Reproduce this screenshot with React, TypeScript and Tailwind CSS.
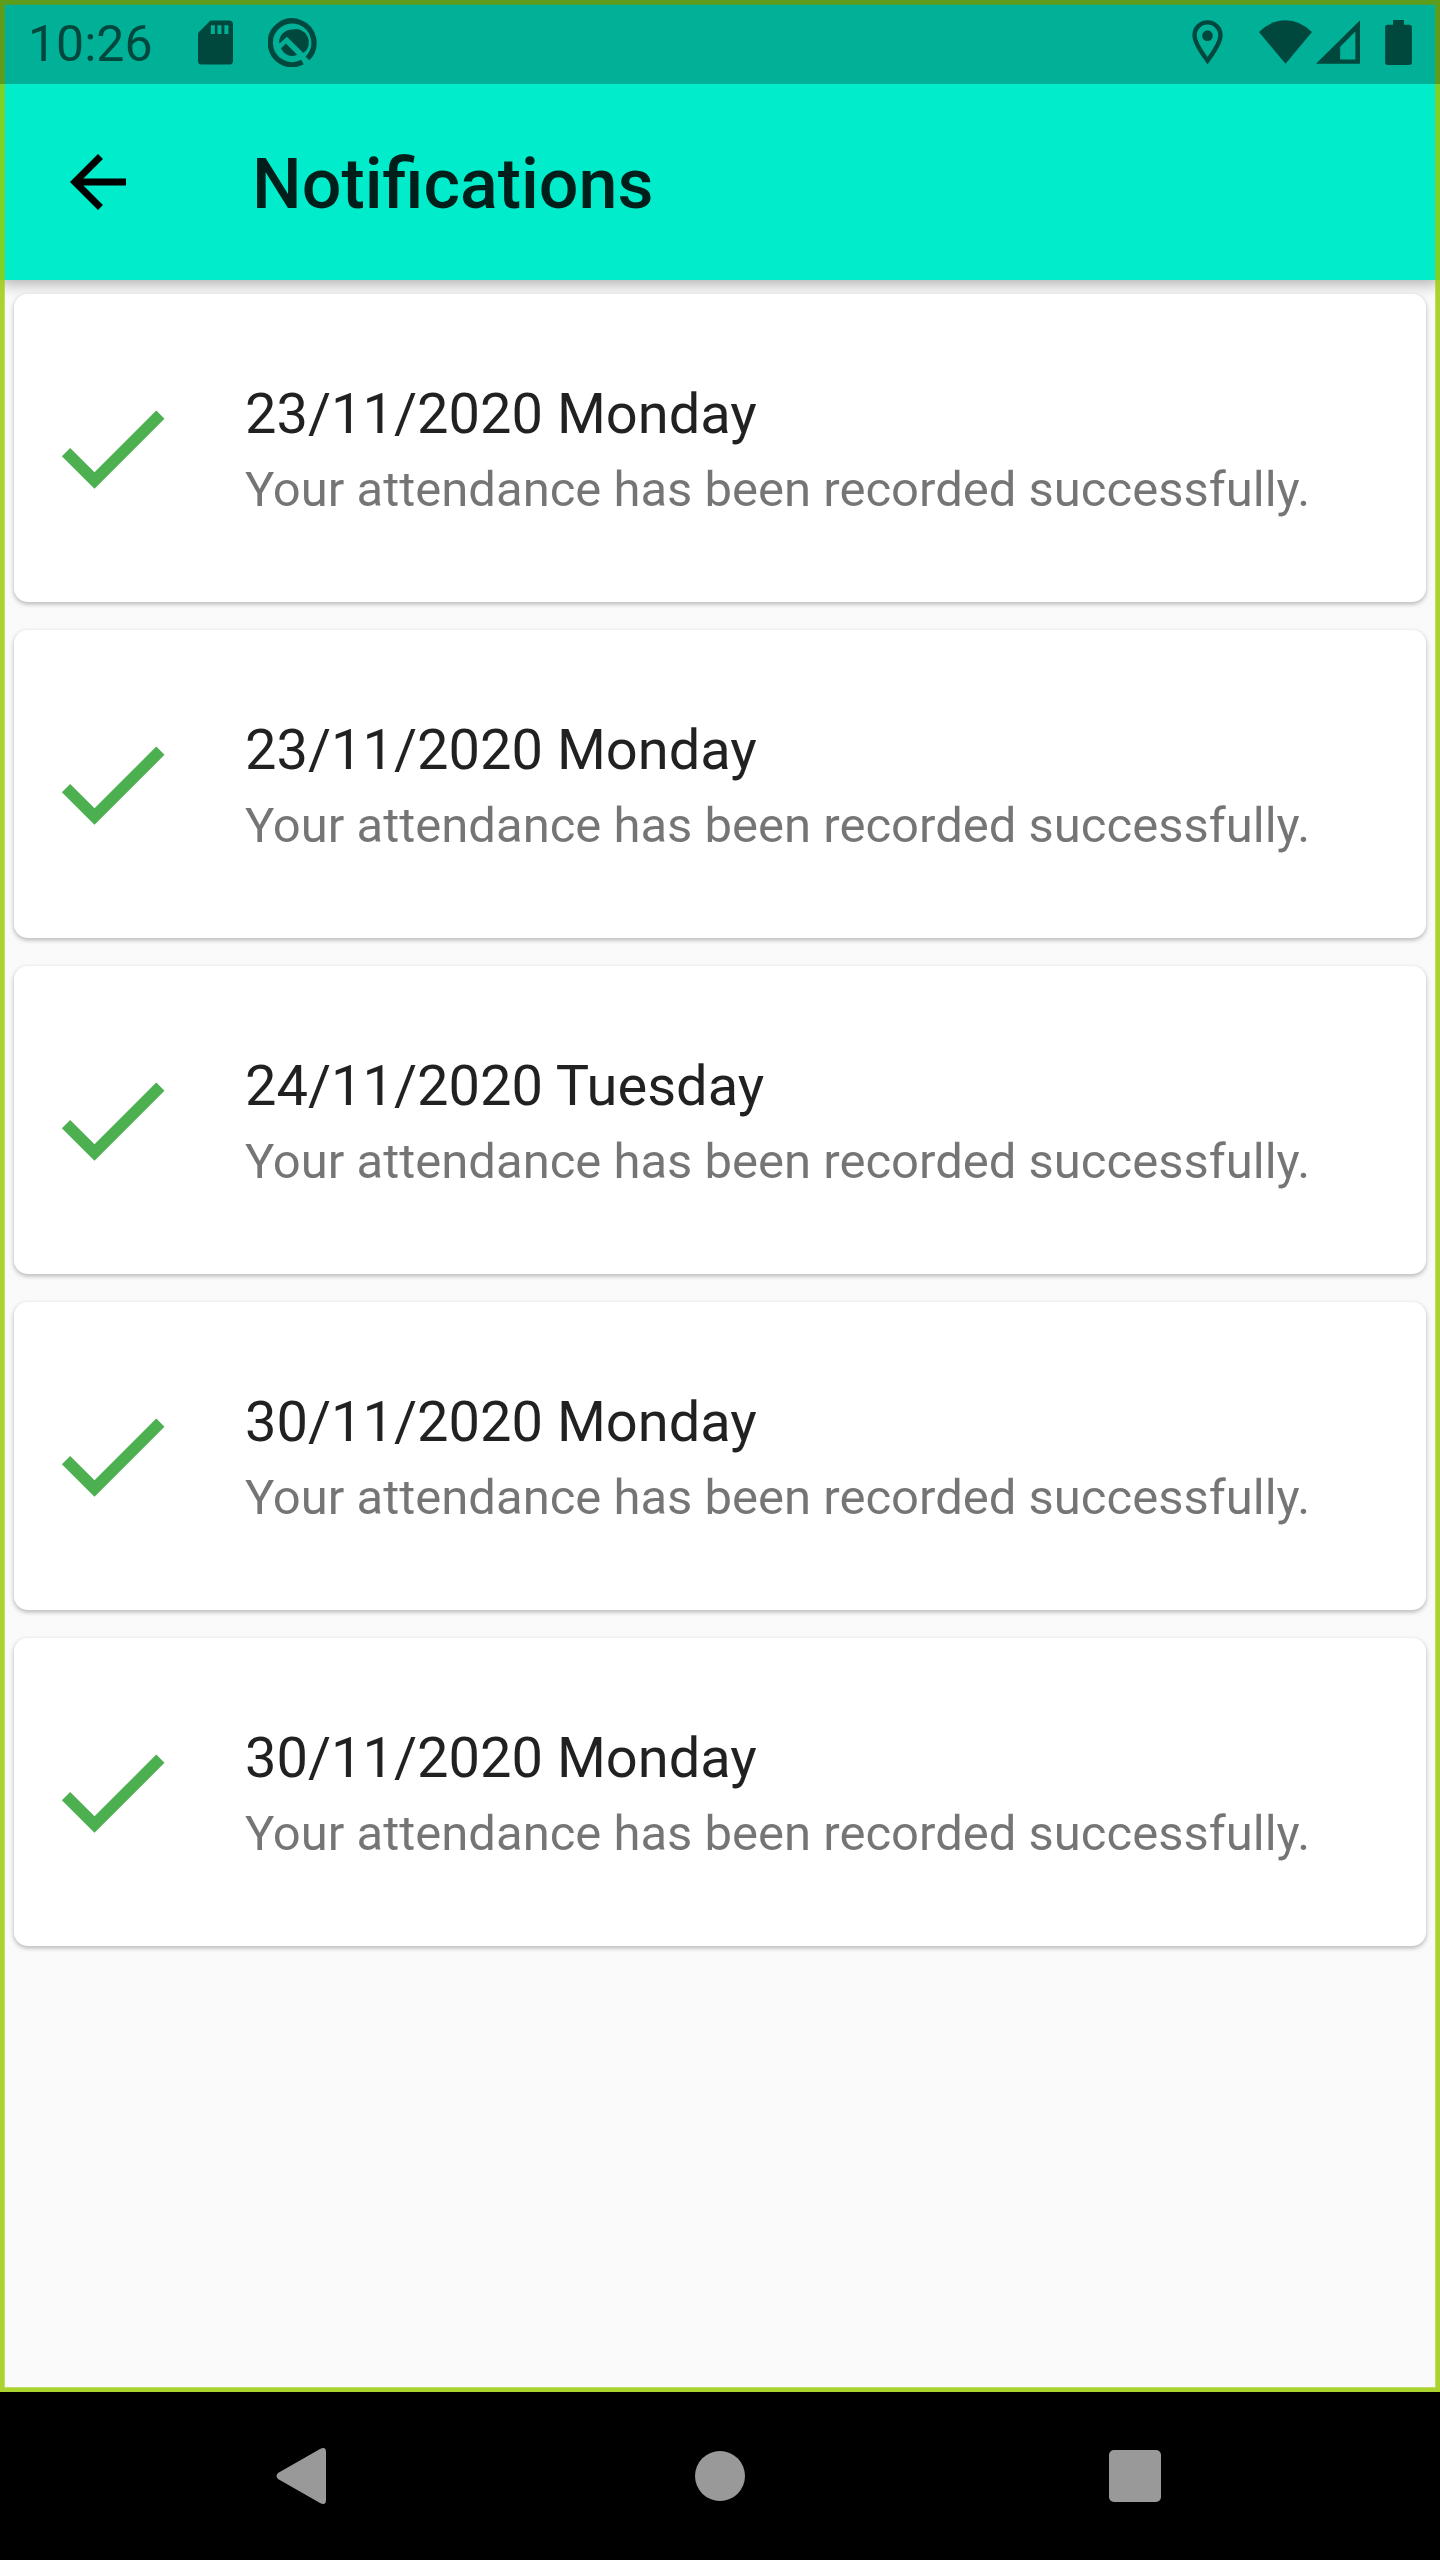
type Notice = { id: number; date: string; message: string };

const MESSAGE = "Your attendance has been recorded successfully.";

const notices: Notice[] = [
  { id: 1, date: "23/11/2020 Monday", message: MESSAGE },
  { id: 2, date: "23/11/2020 Monday", message: MESSAGE },
  { id: 3, date: "24/11/2020 Tuesday", message: MESSAGE },
  { id: 4, date: "30/11/2020 Monday", message: MESSAGE },
  { id: 5, date: "30/11/2020 Monday", message: MESSAGE },
];

function SdCardIcon() {
  return (
    <svg viewBox="0 0 106 134" className="h-[45px] w-[35px]" fill="currentColor" aria-hidden="true">
      <path
        fillRule="evenodd"
        d="M40 0H94Q106 0 106 12V122Q106 134 94 134H12Q0 134 0 122V42Q0 38 3 35L34 4Q37 0 40 0ZM39 15V41H51V15ZM59 15V41H71V15ZM80 15V41H92V15Z"
      />
    </svg>
  );
}

function SystemIcon() {
  return (
    <svg viewBox="0 0 148 148" className="size-[49px]" aria-hidden="true">
      <path
        d="M119 122A66 66 0 1 0 104 133"
        fill="none"
        stroke="currentColor"
        strokeWidth="16"
      />
      <path fill="currentColor" d="M34 75C32 52 52 35 73 35A40 40 0 0 1 107 106L57 57L36 76Z" />
      <path fill="currentColor" d="M39 92L54 77L88 111Q58 124 39 92Z" />
    </svg>
  );
}

function LocationIcon() {
  return (
    <svg viewBox="0 0 92 132" className="h-11 w-[31px]" aria-hidden="true">
      <path
        d="M46 122C36 108 7 72 7 46A39 39 0 0 1 85 46C85 72 56 108 46 122Z"
        fill="none"
        stroke="currentColor"
        strokeWidth="13"
      />
      <circle cx="46" cy="47" r="16" fill="currentColor" />
    </svg>
  );
}

function WifiIcon() {
  return (
    <svg viewBox="0 0 160 132" className="h-11 w-[53px]" fill="currentColor" aria-hidden="true">
      <path d="M0 36Q36 0 80 0T160 36L80 132Z" />
    </svg>
  );
}

function SignalIcon() {
  return (
    <svg viewBox="0 0 133 132" className="size-11" fill="currentColor" aria-hidden="true">
      <path fillRule="evenodd" d="M133 0V132H0ZM119 34L73 80V119H119Z" />
    </svg>
  );
}

function BatteryIcon() {
  return (
    <svg viewBox="0 0 81 136" className="h-[45px] w-[27px]" fill="currentColor" aria-hidden="true">
      <path d="M24 0H57V14H73Q81 14 81 22V128Q81 136 73 136H8Q0 136 0 128V22Q0 14 8 14H24Z" />
    </svg>
  );
}

function StatusBar() {
  return (
    <div className="flex h-[84px] items-center justify-between bg-black/25 px-7 text-[#00483e]">
      <div className="flex items-center">
        <time className="w-[170px] pt-1 text-[50px] leading-[58px]">10:26</time>
        <SdCardIcon />
        <span className="ml-[35px]">
          <SystemIcon />
        </span>
      </div>
      <div className="flex items-center">
        <LocationIcon />
        <span className="ml-9">
          <WifiIcon />
        </span>
        <span className="ml-1">
          <SignalIcon />
        </span>
        <span className="ml-[25px]">
          <BatteryIcon />
        </span>
      </div>
    </div>
  );
}

function NoticeCard({ notice }: { notice: Notice }) {
  return (
    <li className="flex h-[308px] items-center gap-[63px] rounded-[14px] bg-white px-7 shadow-[0_2px_5px_rgba(0,0,0,0.28)]">
      <svg viewBox="0 0 24 24" className="size-[140px] shrink-0 fill-[#4caf50]" aria-hidden="true">
        <path d="M9 16.17 4.83 12l-1.42 1.41L9 19 21 7l-1.41-1.41z" />
      </svg>
      <div className="min-w-0 pt-0.5">
        <h2 className="text-[56px] leading-[66px] text-black/87">{notice.date}</h2>
        <p className="mt-4 text-[49px] leading-[54px] text-black/54">{notice.message}</p>
      </div>
    </li>
  );
}

function NavigationBar() {
  return (
    <nav
      aria-label="System"
      className="grid h-[168px] grid-cols-3 items-center justify-items-center bg-black px-[92px] text-[#999999]"
    >
      <button type="button" aria-label="Back" className="p-4">
        <svg viewBox="0 0 50 56" className="h-14 w-[50px]" fill="currentColor" aria-hidden="true">
          <path d="M44 1Q50-2 50 4V52Q50 58 44 55L2 31Q-1 28 2 25Z" />
        </svg>
      </button>
      <button type="button" aria-label="Home" className="p-4">
        <span className="block size-[50px] rounded-full bg-current" />
      </button>
      <button type="button" aria-label="Recent apps" className="p-4 pr-6">
        <span className="block size-[52px] rounded-[5px] bg-current" />
      </button>
    </nav>
  );
}

export default function App() {
  return (
    <div className="flex min-h-screen flex-col bg-black font-[Roboto,sans-serif]">
      <div className="relative flex flex-1 flex-col bg-[#fafafa]">
        <header className="bg-[#00ecca] shadow-[0_4px_14px_rgba(0,0,0,0.3)]">
          <div className="relative z-20">
            <StatusBar />
          </div>
          <div className="flex h-[196px] items-center pl-14">
            <button type="button" aria-label="Back" className="text-black">
              <svg viewBox="0 0 24 24" className="size-[84px]" fill="currentColor" aria-hidden="true">
                <path d="M20 11H7.83l5.59-5.59L12 4l-8 8 8 8 1.41-1.41L7.83 13H20v-2z" />
              </svg>
            </button>
            <h1 className="ml-28 pt-1 text-[70px] leading-[82px] font-medium text-black/87">Notifications</h1>
          </div>
        </header>
        <main className="p-3.5">
          <ul className="flex flex-col gap-7">
            {notices.map((notice) => (
              <NoticeCard key={notice.id} notice={notice} />
            ))}
          </ul>
        </main>
        <div className="pointer-events-none absolute inset-0 z-10 border-4 border-[#99cc00]/82 shadow-[inset_0_0_0_1px_rgba(153,204,0,0.6)]" />
      </div>
      <NavigationBar />
    </div>
  );
}
